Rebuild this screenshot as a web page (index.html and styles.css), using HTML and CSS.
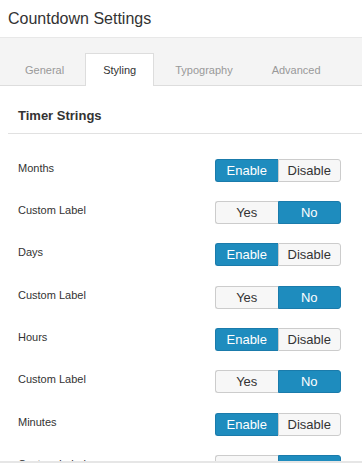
FILE: index.html
```html
<!DOCTYPE html>
<html lang="en">
<head>
    <meta charset="UTF-8">
    <meta name="viewport" content="width=device-width, initial-scale=1.0">
    <title>Countdown Settings</title>
    <link rel="stylesheet" href="styles.css">
</head>
<body>
    <div class="panel">
        <div class="panel-header">
            <h1 class="panel-title">Countdown Settings</h1>
        </div>

        <div class="tabs">
            <div class="tab">General</div>
            <div class="tab active">Styling</div>
            <div class="tab">Typography</div>
            <div class="tab">Advanced</div>
        </div>

        <div class="content">
            <h2 class="section-title">Timer Strings</h2>

            <div class="rows">
                <div class="row">
                    <span class="row-label">Months</span>
                    <div class="toggle">
                        <span class="toggle-btn on">Enable</span>
                        <span class="toggle-btn">Disable</span>
                    </div>
                </div>
                <div class="row">
                    <span class="row-label">Custom Label</span>
                    <div class="toggle">
                        <span class="toggle-btn">Yes</span>
                        <span class="toggle-btn on">No</span>
                    </div>
                </div>
                <div class="row">
                    <span class="row-label">Days</span>
                    <div class="toggle">
                        <span class="toggle-btn on">Enable</span>
                        <span class="toggle-btn">Disable</span>
                    </div>
                </div>
                <div class="row">
                    <span class="row-label">Custom Label</span>
                    <div class="toggle">
                        <span class="toggle-btn">Yes</span>
                        <span class="toggle-btn on">No</span>
                    </div>
                </div>
                <div class="row">
                    <span class="row-label">Hours</span>
                    <div class="toggle">
                        <span class="toggle-btn on">Enable</span>
                        <span class="toggle-btn">Disable</span>
                    </div>
                </div>
                <div class="row">
                    <span class="row-label">Custom Label</span>
                    <div class="toggle">
                        <span class="toggle-btn">Yes</span>
                        <span class="toggle-btn on">No</span>
                    </div>
                </div>
                <div class="row">
                    <span class="row-label">Minutes</span>
                    <div class="toggle">
                        <span class="toggle-btn on">Enable</span>
                        <span class="toggle-btn">Disable</span>
                    </div>
                </div>
                <div class="row">
                    <span class="row-label">Custom Label</span>
                    <div class="toggle">
                        <span class="toggle-btn">Yes</span>
                        <span class="toggle-btn on">No</span>
                    </div>
                </div>
            </div>
        </div>
    </div>
</body>
</html>
```

FILE: styles.css
```css
* {
    margin: 0;
    padding: 0;
    box-sizing: border-box;
}

body {
    font-family: 'Liberation Sans', Arial, sans-serif;
    background: #fff;
    color: #333;
}

.panel {
    height: 463px;
    overflow: hidden;
    border-bottom: 2px solid #e6e6e6;
}

.panel-header {
    height: 38px;
    padding-left: 8px;
    display: flex;
    align-items: center;
    border-bottom: 1px solid #e8e8e8;
    box-shadow: 0 1px 2px rgba(0, 0, 0, 0.04);
}

.panel-title {
    font-size: 16px;
    font-weight: 400;
    color: #333;
}

.tabs {
    height: 48px;
    background: #f4f4f4;
    border-bottom: 1px solid #ddd;
    display: flex;
    align-items: flex-end;
    gap: 3px;
    padding-left: 7px;
}

.tab {
    height: 32px;
    line-height: 32px;
    padding: 0 18px;
    font-size: 11px;
    color: #999;
    margin-bottom: -1px;
}

.tab.active {
    background: #fff;
    color: #333;
    padding: 0 17px;
    border: 1px solid #ddd;
    border-bottom: none;
    height: 33px;
}

.content {
    padding-top: 20px;
}

.section-title {
    margin-left: 8px;
    padding: 0 10px 7px;
    font-size: 13px;
    font-weight: 700;
    line-height: 20px;
    color: #333;
    border-bottom: 1px solid #e1e1e1;
}

.rows {
    padding: 15px 21px 0 18px;
}

.row {
    height: 42.33px;
    display: flex;
    align-items: center;
    justify-content: space-between;
}

.row-label {
    font-size: 11px;
    color: #333;
    margin-top: -5px;
}

.toggle {
    display: flex;
    width: 126px;
    height: 23px;
}

.toggle-btn {
    flex: 1;
    font-size: 13px;
    line-height: 21px;
    text-align: center;
    color: #333;
    background: #f7f7f7;
    border: 1px solid #ccc;
}

.toggle-btn:first-child {
    border-radius: 3px 0 0 3px;
    border-right: none;
}

.toggle-btn:last-child {
    border-radius: 0 3px 3px 0;
}

.toggle-btn.on {
    background: #1e8cbe;
    border-color: #1a7bab;
    color: #fff;
}
```
